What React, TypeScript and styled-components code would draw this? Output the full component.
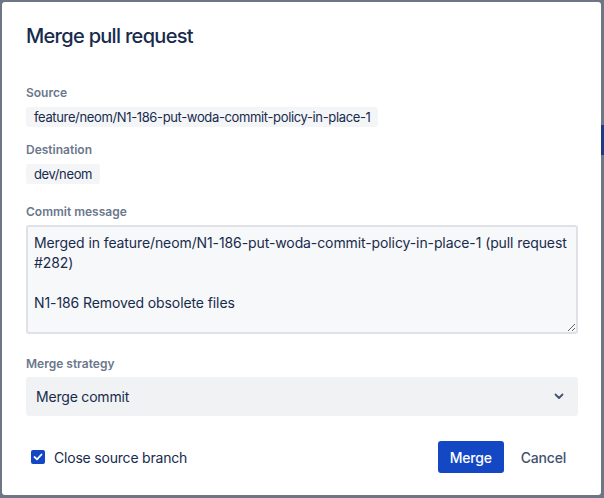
import React from "react";
import styled, { createGlobalStyle } from "styled-components";

const Global = createGlobalStyle`
  html, body { margin: 0; padding: 0; background: #6e7585; }
  body { font-family: Inter, "Noto Sans", "Liberation Sans", sans-serif; color: #172b4d; -webkit-font-smoothing: antialiased; }
  * { box-sizing: border-box; }
`;

const Backdrop = styled.div`
  position: relative;
  width: 604px;
  height: 498px;
  padding: 2px 3px 3px 2px;
  background: #6e7585;
  overflow: hidden;
`;

const Ghost = styled.div`
  position: absolute;
  right: 0;
  top: 125px;
  width: 6px;
  height: 30px;
  background: #1e3a87;
`;

const Dialog = styled.div`
  position: relative;
  width: 599px;
  height: 493px;
  background: #fff;
  border-radius: 3px;
  padding: 22px 23px 22px 24px;
  display: flex;
  flex-direction: column;
`;

const Title = styled.h1`
  margin: 0;
  font-size: 20px;
  line-height: 24px;
  font-weight: 500;
  color: #172b4d;
  letter-spacing: -0.7px;
`;

const Body = styled.div`
  display: flex;
  flex-direction: column;
  margin-top: 37px;
`;

const Field = styled.div<{ $gap?: number }>`
  display: flex;
  flex-direction: column;
  align-items: flex-start;
  margin-top: ${(p) => p.$gap ?? 0}px;
`;

const Label = styled.label<{ $space?: number }>`
  font-size: 12px;
  line-height: 16px;
  font-weight: 600;
  color: #6b778c;
  margin-bottom: ${(p) => p.$space ?? 6}px;
`;

const Tag = styled.span`
  display: inline-block;
  background: #f4f5f7;
  border-radius: 3px;
  padding: 0 8px;
  height: 20px;
  font-size: 13px;
  line-height: 20px;
  letter-spacing: -0.36px;
  color: #172b4d;
`;

const TextArea = styled.textarea`
  width: 552px;
  height: 109px;
  margin: 0;
  border: 2px solid #dfe1e6;
  border-radius: 3px;
  background: #f7f8f9;
  padding: 6px 6px;
  font-family: inherit;
  font-size: 14px;
  line-height: 20px;
  letter-spacing: -0.1px;
  color: #172b4d;
  resize: vertical;
  outline: none;
  overflow: hidden;
`;

const Select = styled.div`
  width: 552px;
  height: 39px;
  background: #f1f2f4;
  border-radius: 3px;
  display: flex;
  align-items: center;
  justify-content: space-between;
  padding: 0 14px 0 10px;
  font-size: 14px;
  letter-spacing: -0.2px;
  color: #172b4d;
`;

const Footer = styled.div`
  margin-top: auto;
  display: flex;
  align-items: center;
  justify-content: space-between;
`;

const CheckRow = styled.label`
  display: flex;
  align-items: center;
  gap: 9px;
  padding-left: 5px;
  font-size: 14px;
  letter-spacing: -0.2px;
  color: #172b4d;
`;

const Box = styled.span`
  width: 14px;
  height: 14px;
  border-radius: 2px;
  background: #1447c4;
  display: flex;
  align-items: center;
  justify-content: center;
`;

const Actions = styled.div`
  display: flex;
  align-items: center;
  gap: 5px;
`;

const Button = styled.button<{ $primary?: boolean }>`
  height: 32px;
  border: none;
  border-radius: 3px;
  padding: 0 12px;
  font-family: inherit;
  font-size: 14px;
  font-weight: 500;
  letter-spacing: -0.2px;
  background: ${(p) => (p.$primary ? "#1447c4" : "transparent")};
  color: ${(p) => (p.$primary ? "#fff" : "#42526e")};
  cursor: pointer;
`;

export default function App() {
  return (
    <>
      <Global />
      <Backdrop>
        <Ghost />
        <Dialog>
          <Title>Merge pull request</Title>
          <Body>
            <Field>
              <Label>Source</Label>
              <Tag>feature/neom/N1-186-put-woda-commit-policy-in-place-1</Tag>
            </Field>
            <Field $gap={15}>
              <Label>Destination</Label>
              <Tag>dev/neom</Tag>
            </Field>
            <Field $gap={20}>
              <Label $space={5}>Commit message</Label>
              <TextArea
                readOnly
                defaultValue={
                  "Merged in feature/neom/N1-186-put-woda-commit-policy-in-place-1 (pull request #282)\n\nN1-186 Removed obsolete files"
                }
              />
            </Field>
            <Field $gap={22}>
              <Label $space={5}>Merge strategy</Label>
              <Select>
                <span>Merge commit</span>
                <svg width="10" height="7" viewBox="0 0 10 7" fill="none">
                  <path d="M1.5 1.5 L5 5 L8.5 1.5" stroke="#42526e" strokeWidth="1.8" strokeLinecap="round" strokeLinejoin="round" />
                </svg>
              </Select>
            </Field>
          </Body>
          <Footer>
            <CheckRow>
              <Box>
                <svg width="10" height="8" viewBox="0 0 10 8" fill="none">
                  <path d="M1.5 4 L4 6.3 L8.5 1.5" stroke="#fff" strokeWidth="1.8" strokeLinecap="round" strokeLinejoin="round" />
                </svg>
              </Box>
              Close source branch
            </CheckRow>
            <Actions>
              <Button $primary>Merge</Button>
              <Button>Cancel</Button>
            </Actions>
          </Footer>
        </Dialog>
      </Backdrop>
    </>
  );
}
